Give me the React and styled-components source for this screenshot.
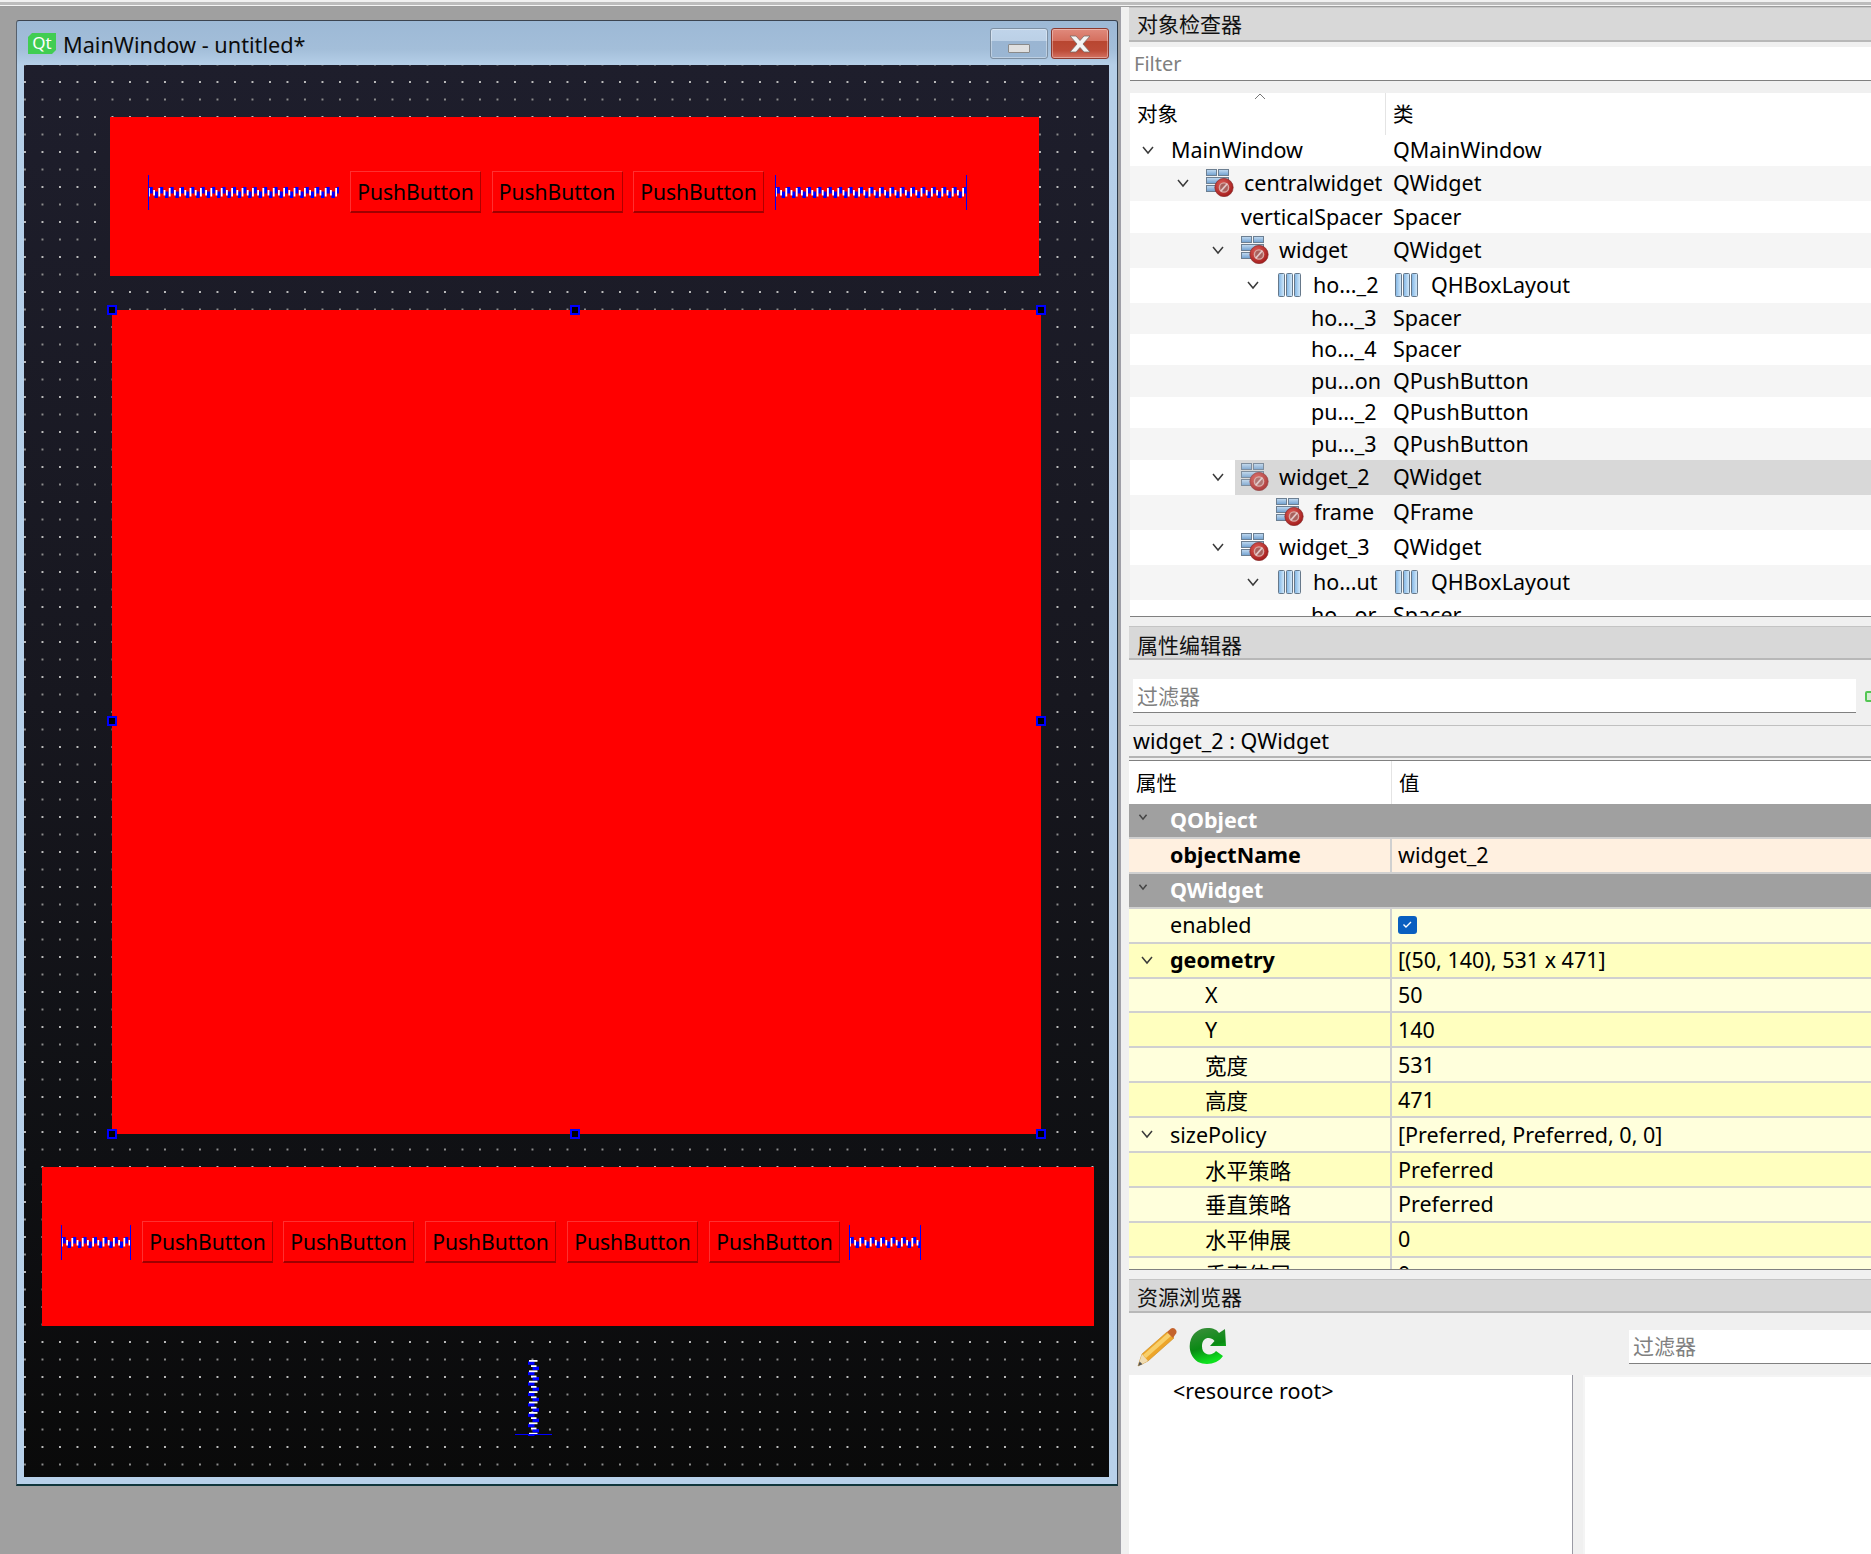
import React from 'react'
import styled, { createGlobalStyle } from 'styled-components'

const GlobalStyle = createGlobalStyle`
  html, body { margin: 0; padding: 0; background: #f0f0f0; }
  * { box-sizing: border-box; }
`

const FONT = `"Noto Sans", "Noto Sans CJK SC", sans-serif`

const treeRows = [
  { depth: 0, name: 'MainWindow', cls: 'QMainWindow', h: 31, chevron: true },
  { depth: 1, name: 'centralwidget', cls: 'QWidget', h: 35, alt: true, chevron: true, icon: 'widget' },
  { depth: 2, name: 'verticalSpacer', cls: 'Spacer', h: 32 },
  { depth: 2, name: 'widget', cls: 'QWidget', h: 35, alt: true, chevron: true, icon: 'widget' },
  { depth: 3, name: 'ho..._2', cls: 'QHBoxLayout', h: 35, chevron: true, icon: 'layout', clsIcon: true },
  { depth: 4, name: 'ho..._3', cls: 'Spacer', h: 31, alt: true },
  { depth: 4, name: 'ho..._4', cls: 'Spacer', h: 31 },
  { depth: 4, name: 'pu...on', cls: 'QPushButton', h: 32, alt: true },
  { depth: 4, name: 'pu..._2', cls: 'QPushButton', h: 31 },
  { depth: 4, name: 'pu..._3', cls: 'QPushButton', h: 32, alt: true },
  { depth: 2, name: 'widget_2', cls: 'QWidget', h: 35, sel: true, chevron: true, icon: 'widget' },
  { depth: 3, name: 'frame', cls: 'QFrame', h: 35, alt: true, icon: 'widget' },
  { depth: 2, name: 'widget_3', cls: 'QWidget', h: 35, chevron: true, icon: 'widget' },
  { depth: 3, name: 'ho...ut', cls: 'QHBoxLayout', h: 35, alt: true, chevron: true, icon: 'layout', clsIcon: true },
  { depth: 4, name: 'ho...or', cls: 'Spacer', h: 31 },
]

const propRows = [
  { type: 'section', name: 'QObject' },
  { name: 'objectName', value: 'widget_2', bold: true, tone: 'peach' },
  { type: 'section', name: 'QWidget' },
  { name: 'enabled', check: true, tone: 'light' },
  { name: 'geometry', value: '[(50, 140), 531 x 471]', bold: true, chevron: true, tone: 'dark' },
  { name: 'X', value: '50', sub: true, tone: 'light' },
  { name: 'Y', value: '140', sub: true, tone: 'dark' },
  { name: '宽度', value: '531', sub: true, tone: 'light' },
  { name: '高度', value: '471', sub: true, tone: 'dark' },
  { name: 'sizePolicy', value: '[Preferred, Preferred, 0, 0]', chevron: true, tone: 'light' },
  { name: '水平策略', value: 'Preferred', sub: true, tone: 'dark' },
  { name: '垂直策略', value: 'Preferred', sub: true, tone: 'light' },
  { name: '水平伸展', value: '0', sub: true, tone: 'dark' },
  { name: '垂直伸展', value: '0', sub: true, tone: 'light' },
]

const toneColors = { peach: '#fff0e0', light: '#ffffdc', dark: '#ffffbf' }

const Chevron = ({ small }) => (
  <svg width={small ? 10 : 14} height={small ? 8 : 10} viewBox="0 0 14 10" fill="none">
    <path d="M2 2 L7 8 L12 2" stroke={small ? '#444' : '#3a3a3a'} strokeWidth={small ? 2.2 : 1.5} />
  </svg>
)

const WidgetIcon = ({ dim }) => (
  <svg width="28" height="28" viewBox="0 0 28 28" style={{ opacity: dim ? 0.82 : 1 }}>
    <defs>
      <linearGradient id="cell" x1="0" y1="0" x2="0" y2="1">
        <stop offset="0" stopColor="#c4dcf2" />
        <stop offset="1" stopColor="#6f9fcf" />
      </linearGradient>
      <radialGradient id="noSign" cx="0.4" cy="0.35" r="0.7">
        <stop offset="0" stopColor="#e0605a" />
        <stop offset="1" stopColor="#a01818" />
      </radialGradient>
    </defs>
    <g stroke="#6c7f92" fill="url(#cell)">
      <rect x="0.5" y="0.5" width="10" height="6" />
      <rect x="12.5" y="0.5" width="10" height="6" />
      <rect x="0.5" y="8.5" width="22" height="6" />
      <rect x="0.5" y="16.5" width="10" height="6" />
    </g>
    <circle cx="18" cy="18.5" r="9.2" fill="url(#noSign)" stroke="#7e2626" strokeWidth="0.6" />
    <circle cx="18" cy="18.5" r="4.6" fill="#a8605c" stroke="#d8a8a4" strokeWidth="1.4" />
    <path d="M14.6 22.4 L21.4 14.6" stroke="#e4c8c8" strokeWidth="1.6" />
  </svg>
)

const LayoutIcon = () => (
  <svg width="24" height="24" viewBox="0 0 24 24">
    <defs>
      <linearGradient id="bar" x1="0" y1="0" x2="1" y2="0">
        <stop offset="0" stopColor="#7fb4e4" />
        <stop offset="1" stopColor="#d8ecfb" />
      </linearGradient>
    </defs>
    <g stroke="#66788a" fill="url(#bar)">
      <rect x="0.5" y="0.5" width="6" height="23" rx="1" />
      <rect x="8.5" y="0.5" width="6" height="23" rx="1" />
      <rect x="16.5" y="0.5" width="6" height="23" rx="1" />
    </g>
  </svg>
)

const PencilIcon = () => (
  <svg width="40" height="40" viewBox="0 0 40 40">
    <path d="M1 39 L5 27 L30 5 L37 11 L11 34 Z" fill="#eda52a" stroke="#c98a1c" strokeWidth="0.6" />
    <path d="M6 28 L31 6 L34 9 L9 31 Z" fill="#f8cf6a" />
    <path d="M1 39 L5 27 L11 34 Z" fill="#efdcb4" />
    <path d="M1 39 L2.6 34.5 L5.5 37.2 Z" fill="#555" />
    <path d="M30 5 L34 1.5 Q37 0 39 3 Q40.5 6 38 8 L36 11 Z" fill="#c4632c" />
  </svg>
)

const RefreshIcon = () => (
  <svg width="38" height="38" viewBox="0 0 38 38">
    <defs>
      <linearGradient id="arrow" x1="0" y1="0" x2="0.3" y2="1">
        <stop offset="0" stopColor="#3f8f3f" />
        <stop offset="0.6" stopColor="#0a8a14" />
        <stop offset="1" stopColor="#0ee01e" />
      </linearGradient>
    </defs>
    <path
      d="M18 1 C25 1 28 3 30 6 L36 2 L37 19 L21 19 L25.5 14 C23 11 20 10.5 17 11.5 C13 13 12 20 14 24 C17 29 24 28 27 24 L34 29 C29 37 17 39 9 35 C1 30 -1 20 2 12 C5 5 11 1 18 1 Z"
      fill="url(#arrow)"
    />
  </svg>
)

const Coil = ({ length, vertical }) => {
  const parts = []
  const count = Math.ceil(length / 5.2)
  const box = (a, b, len, thick, fill, key) =>
    vertical
      ? <rect key={key} x={b} y={a} width={thick} height={len} fill={fill} />
      : <rect key={key} x={a} y={b} width={len} height={thick} fill={fill} />
  for (let i = 0; i < count; i++) {
    const at = i * 5.2
    if (i % 2 === 0) {
      parts.push(box(at + 1.4, 0, 3.4, 6.5, '#0000ff', `b${i}`))
      parts.push(box(at, 1, 1.8, 8.5, '#ffffff', `w${i}`))
    } else {
      parts.push(box(at + 1.4, 4.5, 3.4, 6.5, '#0000ff', `b${i}`))
      parts.push(box(at, 3, 1.8, 5.5, '#ffffff', `w${i}`))
    }
  }
  return <>{parts}</>
}

const HSpacer = ({ width, noEnd }) => (
  <svg width={width} height="35" viewBox={`0 0 ${width} 35`} style={{ flex: 'none' }}>
    <g transform="translate(0 12)"><Coil length={width} /></g>
    <rect x="0" y="0" width="1" height="35" fill="#0000ff" />
    {!noEnd && <rect x={width - 1} y="0" width="1" height="35" fill="#0000ff" />}
  </svg>
)

const VSpacer = () => (
  <svg width="37" height="76" viewBox="0 0 37 76" style={{ display: 'block' }}>
    <g transform="translate(13 0)"><Coil length={76} vertical /></g>
    <rect x="0" y="74" width="37" height="1" fill="#0000ff" />
  </svg>
)

const Root = styled.div`
  width: 1871px;
  height: 1554px;
  overflow: hidden;
  display: flex;
  flex-direction: column;
  font-family: ${FONT};
  font-size: 21.5px;
  color: #000;
  background: #f0f0f0;
`

const TopStrip = styled.div`
  height: 7px;
  flex: none;
  background: #f0f0f0;
  border-top: 2px solid #f0f0f0;
  box-shadow: inset 0 3px 0 #bcbcbc, inset 0 4px 0 #f4f4f4, inset 0 5px 0 #9c9c9c;
`

const Main = styled.div`
  flex: 1;
  display: flex;
  min-height: 0;
`

const MdiArea = styled.div`
  width: 1120px;
  flex: none;
  background: #a0a0a0;
  padding: 13px 0 0 16px;
`

const FormWindow = styled.div`
  width: 1102px;
  height: 1466px;
  padding: 0 8px 8px 7px;
  border-top: 1px solid #3c4450;
  border-left: 1px solid #56606c;
  border-right: 1px solid #2c3a48;
  border-bottom: 2px solid #10363c;
  border-top-left-radius: 3px;
  border-top-right-radius: 3px;
  background: linear-gradient(180deg, #9db9d6 0, #a3bed9 28px, #b5cfe8 44px, #b8d1ea 100%);
`

const TitleBar = styled.div`
  height: 44px;
  display: flex;
  align-items: flex-start;
`

const QtLogo = styled.span`
  width: 28px;
  height: 21px;
  margin: 12px 7px 0 4px;
  background: #41cd52;
  color: #fff;
  font-size: 17px;
  line-height: 20px;
  text-align: center;
  clip-path: polygon(4px 0, 100% 0, 100% calc(100% - 4px), calc(100% - 4px) 100%, 0 100%, 0 4px);
`

const WindowTitle = styled.span`
  font-size: 21.7px;
  line-height: 32px;
  margin-top: 8px;
  flex: 1;
  color: #0c0c0c;
`

const WindowButton = styled.div`
  width: 58px;
  height: 31px;
  margin: 7px 0 0 3px;
  border-radius: 3px;
  border: 1px solid ${p => (p.$close ? '#8c3a30' : '#7d8fa2')};
  box-shadow: inset 0 0 0 1px rgba(255, 255, 255, 0.35);
  display: flex;
  align-items: center;
  justify-content: center;
  background: ${p =>
    p.$close
      ? 'linear-gradient(180deg, #e08a7c 0, #d5705f 40%, #b84630 41%, #bd4c38 75%, #d47262 100%)'
      : 'linear-gradient(180deg, #c0d4ea 0, #bbd0e6 42%, #9ab5d2 43%, #9ab6d3 100%)'};
`

const MinimizeGlyph = styled.div`
  width: 22px;
  height: 9px;
  margin-top: 9px;
  background: #e0e0e0;
  border: 1px solid #8a8a8a;
  border-radius: 1px;
`

const Canvas = styled.div`
  height: 1412px;
  padding-top: 52px;
  background-color: #14141c;
  background-image:
    radial-gradient(circle at 1px 1px, #bcbcbc 1px, transparent 1.4px),
    radial-gradient(circle at 1px 1px, #8c8c8c 0.8px, transparent 1.1px),
    linear-gradient(180deg, #1e1e2c 0, #17171f 45%, #0f1013 78%, #0a0a0a 100%);
  background-size: 17.5px 35px, 17.5px 35px, 100% 100%;
  background-position: 0 16px, 0 33.5px, 0 0;
`

const RedPanel = styled.div`
  position: relative;
  background: #ff0000;
  margin-left: ${p => p.$left}px;
  margin-top: ${p => p.$top || 0}px;
  width: ${p => p.$width}px;
  height: ${p => p.$height}px;
`

const ButtonRow = styled.div`
  display: flex;
  align-items: center;
  padding: 54px 0 0 ${p => p.$pad}px;
`

const PushButton = styled.div`
  width: 131px;
  height: 42px;
  flex: none;
  margin-left: ${p => p.$gap}px;
  border-top: 1px solid #ff3030;
  border-left: 1px solid #ff3030;
  border-right: 1px solid #b00000;
  border-bottom: 2px solid #a00000;
  font-size: 21.1px;
  line-height: 39px;
  text-align: center;
`

const EndSpacer = styled.div`
  margin-left: ${p => p.$gap}px;
  display: flex;
`

const Handle = styled.div`
  position: absolute;
  width: 10px;
  height: 10px;
  background: #000;
  border: 2px solid #0000ff;
  left: ${p => p.$x};
  top: ${p => p.$y};
  transform: translate(-50%, -50%);
`

const SpacerSlot = styled.div`
  margin: 34px 0 0 491px;
  width: 37px;
`

const SidePanel = styled.div`
  flex: 1;
  min-width: 0;
  border-left: 1px solid #a0a0a8;
  padding-left: 8px;
  display: flex;
  flex-direction: column;
  background: #f0f0f0;
`

const DockHeader = styled.div`
  height: ${p => p.$h || 35}px;
  margin-top: ${p => p.$top || 0}px;
  flex: none;
  background: #d8d8d8;
  border-bottom: 2px solid #b8b8b8;
  border-top: 1px solid #c4c4c4;
  padding-left: 8px;
  font-size: 21px;
  line-height: ${p => p.$lh}px;
  color: #111;
`

const FilterInput = styled.div`
  flex: none;
  height: 34px;
  margin: ${p => p.$margin};
  width: ${p => p.$width || 'auto'};
  background: #fff;
  border-bottom: 1px solid #808080;
  color: #808080;
  padding-left: 4px;
  font-size: ${p => p.$size || 21}px;
  line-height: ${p => p.$lh}px;
`

const FilterRow = styled.div`
  flex: none;
  display: flex;
  align-items: flex-start;
  overflow: hidden;
`

const AddButton = styled.div`
  flex: none;
  width: 12px;
  height: 11px;
  margin: 31px 0 0 9px;
  border: 2px solid #52c652;
  background: #d4ecd4;
  border-radius: 2px;
`

const TreeView = styled.div`
  height: 524px;
  flex: none;
  overflow: hidden;
  background: #fff;
  border-bottom: 1px solid #808080;
  margin-left: 1px;
`

const HeaderRow = styled.div`
  height: ${p => p.$h}px;
  display: flex;
  background: #fff;
`

const HeaderCell = styled.div`
  position: relative;
  flex: none;
  width: ${p => p.$width || 'auto'};
  padding-left: 7px;
  line-height: ${p => p.$lh || 42}px;
  font-size: 20.5px;
  border-right: ${p => (p.$divider ? '1px solid #e4e4e4' : 'none')};
`

const SortArrow = styled.span`
  position: absolute;
  left: 124px;
  top: 0;
  width: 12px;
  height: 8px;
  svg { display: block; }
`

const TreeRow = styled.div`
  height: ${p => p.$h}px;
  display: flex;
  align-items: center;
  padding-bottom: 2px;
  background: ${p =>
    p.$sel ? 'linear-gradient(90deg, #fff 105px, #d8d8d8 105px)' : p.$alt ? '#f5f5f5' : '#fff'};
`

const NameCell = styled.div`
  width: 256px;
  flex: none;
  display: flex;
  align-items: center;
  white-space: nowrap;
  padding-left: ${p => 6 + p.$depth * 35}px;
`

const ChevronSlot = styled.span`
  width: 35px;
  flex: none;
  display: flex;
  padding-left: 5px;
`

const IconSlot = styled.span`
  flex: none;
  display: flex;
  width: ${p => (p.$layout ? 37 : 38)}px;
  padding-left: ${p => (p.$layout ? 2 : 0)}px;
`

const ClassCell = styled.div`
  display: flex;
  align-items: center;
  padding-left: 7px;
  white-space: nowrap;
`

const ClassIcon = styled.span`
  display: flex;
  margin: 0 12px 0 2px;
`

const InfoLabel = styled.div`
  height: 31px;
  flex: none;
  margin-top: 12px;
  padding-left: 4px;
  border-top: 1px solid #c0c0c0;
  line-height: 29px;
`

const TableRule = styled.div`
  height: 5px;
  flex: none;
  border-top: 2px solid #b4b4b4;
  border-bottom: 1px solid #808080;
`

const PropertyTable = styled.div`
  height: 509px;
  flex: none;
  overflow: hidden;
  background: #fff;
  border-bottom: 1px solid #808080;
`

const SectionRow = styled.div`
  height: 34.92px;
  display: flex;
  align-items: center;
  background: #a0a0a0;
  border-bottom: 2px solid #d0d0d0;
  color: #fff;
  font-weight: 700;
  padding: 0 0 2px 9px;
`

const SectionChevron = styled.span`
  width: 32px;
  display: flex;
  margin-top: -4px;
`

const PropRow = styled.div`
  height: 34.92px;
  display: flex;
  align-items: center;
  background: ${p => toneColors[p.$tone]};
  border-bottom: 2px solid #d0d0d0;
`

const PropName = styled.div`
  width: 263px;
  flex: none;
  height: 100%;
  display: flex;
  align-items: center;
  border-right: 2px solid #d0d0d0;
  padding-left: ${p => (p.$sub ? 76 : 41)}px;
  padding-bottom: 1px;
  font-weight: ${p => (p.$bold ? 700 : 400)};
  position: relative;
`

const PropChevron = styled.span`
  position: absolute;
  left: 11px;
  top: 11px;
  display: flex;
`

const PropValue = styled.div`
  padding: 0 0 1px 6px;
  white-space: nowrap;
`

const CheckBox = styled.div`
  width: 19px;
  height: 18px;
  border-radius: 3px;
  background: #0a5fc0;
  display: flex;
  align-items: center;
  justify-content: center;
`

const Toolbar = styled.div`
  height: 62px;
  flex: none;
  display: flex;
  align-items: flex-start;
`

const ToolIcon = styled.span`
  display: flex;
  margin: ${p => p.$margin};
`

const BrowserSplit = styled.div`
  flex: 1;
  display: flex;
  min-height: 0;
`

const ResourceTree = styled.div`
  width: 444px;
  flex: none;
  background: #fff;
  border-right: 1px solid #9a9aa4;
  padding: 0 0 0 44px;
  font-size: 21.5px;
  line-height: 32px;
`

const ResourceList = styled.div`
  flex: 1;
  margin-left: 10px;
  background: #fff;
  border-left: 2px solid #f4f4f4;
  border-top: 2px solid #f4f4f4;
`

const handles = [
  ['0', '0'], ['calc(50% - 2px)', '0'], ['100%', '0'],
  ['0', 'calc(50% - 1px)'], ['100%', 'calc(50% - 1px)'],
  ['0', '100%'], ['calc(50% - 2px)', '100%'], ['100%', '100%'],
]

const App = () => {
  return (
    <Root>
      <GlobalStyle />
      <TopStrip />
      <Main>
        <MdiArea>
          <FormWindow>
            <TitleBar>
              <QtLogo>Qt</QtLogo>
              <WindowTitle>MainWindow - untitled*</WindowTitle>
              <WindowButton><MinimizeGlyph /></WindowButton>
              <WindowButton $close>
                <svg width="24" height="18" viewBox="0 0 24 18">
                  <path d="M2 1 H8 L12 5.5 L16 1 H22 L15 9 L22 17 H16 L12 12.5 L8 17 H2 L9 9 Z" fill="#f4f4f4" stroke="#7a6a66" strokeWidth="0.8" />
                </svg>
              </WindowButton>
            </TitleBar>
            <Canvas>
              <RedPanel $left={86} $width={929} $height={159}>
                <ButtonRow $pad={37.5}>
                  <HSpacer width={191} noEnd />
                  <PushButton $gap={11.5}>PushButton</PushButton>
                  <PushButton $gap={10.5}>PushButton</PushButton>
                  <PushButton $gap={10.5}>PushButton</PushButton>
                  <EndSpacer $gap={11}><HSpacer width={192} /></EndSpacer>
                </ButtonRow>
              </RedPanel>
              <RedPanel $left={88} $top={34} $width={929} $height={824}>
                {handles.map(([x, y]) => <Handle key={x + y} $x={x} $y={y} />)}
              </RedPanel>
              <RedPanel $left={18} $top={33} $width={1052} $height={159}>
                <ButtonRow $pad={19}>
                  <HSpacer width={70} />
                  {[11, 10, 11, 11, 11].map((gap, i) => (
                    <PushButton key={i} $gap={gap}>PushButton</PushButton>
                  ))}
                  <EndSpacer $gap={9}><HSpacer width={72} /></EndSpacer>
                </ButtonRow>
              </RedPanel>
              <SpacerSlot><VSpacer /></SpacerSlot>
            </Canvas>
          </FormWindow>
        </MdiArea>
        <SidePanel>
          <DockHeader $lh={33}>对象检查器</DockHeader>
          <FilterInput $margin="5px 0 12px 1px" $lh={34} $size={20}>Filter</FilterInput>
          <TreeView>
            <HeaderRow $h={42}>
              <HeaderCell $width="256px" $divider>
                对象
                <SortArrow>
                  <svg width="12" height="8" viewBox="0 0 12 8" fill="none">
                    <path d="M1 6 L6 1 L11 6" stroke="#777" />
                  </svg>
                </SortArrow>
              </HeaderCell>
              <HeaderCell>类</HeaderCell>
            </HeaderRow>
            {treeRows.map(r => (
              <TreeRow key={r.name} $h={r.h} $alt={r.alt} $sel={r.sel}>
                <NameCell $depth={r.depth}>
                  <ChevronSlot>{r.chevron && <Chevron />}</ChevronSlot>
                  {r.icon === 'widget' && <IconSlot><WidgetIcon dim={r.sel} /></IconSlot>}
                  {r.icon === 'layout' && <IconSlot $layout><LayoutIcon /></IconSlot>}
                  {r.name}
                </NameCell>
                <ClassCell>
                  {r.clsIcon && <ClassIcon><LayoutIcon /></ClassIcon>}
                  {r.cls}
                </ClassCell>
              </TreeRow>
            ))}
          </TreeView>
          <DockHeader $h={34} $top={9} $lh={36}>属性编辑器</DockHeader>
          <FilterRow>
            <FilterInput $margin="19px 0 0 4px" $width="723px" $lh={34}>过滤器</FilterInput>
            <AddButton />
          </FilterRow>
          <InfoLabel>widget_2 : QWidget</InfoLabel>
          <TableRule />
          <PropertyTable>
            <HeaderRow $h={43}>
              <HeaderCell $width="263px" $divider $lh={44}>属性</HeaderCell>
              <HeaderCell $lh={44}>值</HeaderCell>
            </HeaderRow>
            {propRows.map(r =>
              r.type === 'section' ? (
                <SectionRow key={r.name}>
                  <SectionChevron><Chevron small /></SectionChevron>
                  {r.name}
                </SectionRow>
              ) : (
                <PropRow key={r.name} $tone={r.tone}>
                  <PropName $sub={r.sub} $bold={r.bold}>
                    {r.chevron && <PropChevron><Chevron /></PropChevron>}
                    {r.name}
                  </PropName>
                  <PropValue>
                    {r.check ? (
                      <CheckBox>
                        <svg width="11" height="9" viewBox="0 0 11 9" fill="none">
                          <path d="M1.5 4.5 L4 7 L9 2" stroke="#fff" strokeWidth="1.4" />
                        </svg>
                      </CheckBox>
                    ) : r.value}
                  </PropValue>
                </PropRow>
              )
            )}
          </PropertyTable>
          <DockHeader $h={34} $top={9} $lh={34}>资源浏览器</DockHeader>
          <Toolbar>
            <ToolIcon $margin="14px 0 0 8px"><PencilIcon /></ToolIcon>
            <ToolIcon $margin="14px 0 0 12px"><RefreshIcon /></ToolIcon>
            <FilterInput $margin="17px -20px 0 402px" $width="300px" $lh={32}>过滤器</FilterInput>
          </Toolbar>
          <BrowserSplit>
            <ResourceTree>&lt;resource root&gt;</ResourceTree>
            <ResourceList />
          </BrowserSplit>
        </SidePanel>
      </Main>
    </Root>
  )
}

export default App
